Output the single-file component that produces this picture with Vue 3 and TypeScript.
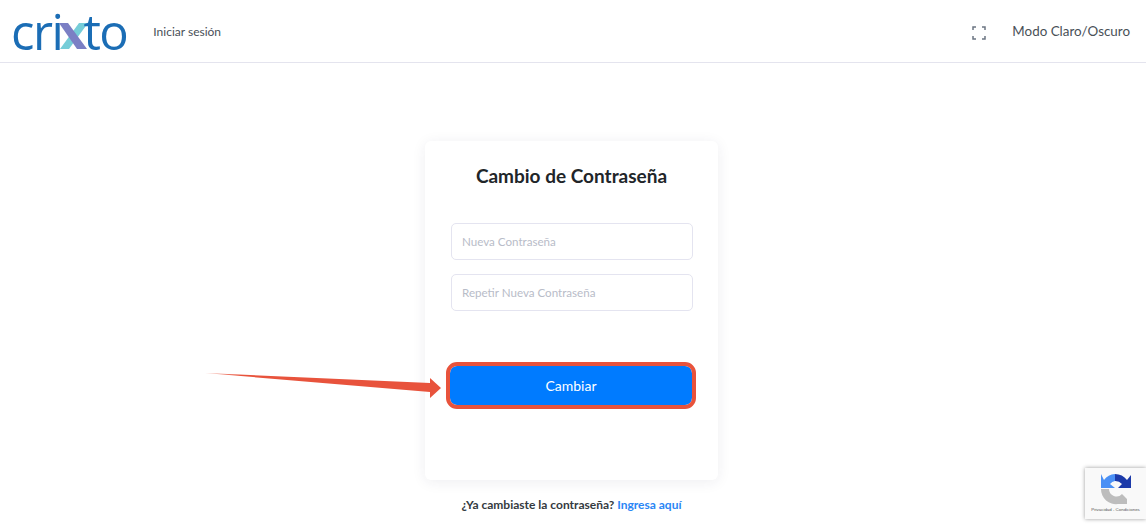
<script setup lang="ts">
import { ref } from 'vue'

const password = ref('')
const repeated = ref('')
</script>

<template>
  <div class="page">
    <header class="topbar">
      <div class="left">
        <span class="logo">cri<svg class="logo-x" viewBox="3 0 21 26" aria-hidden="true">
            <polygon points="20,0 29,0 10,26 1,26" fill="#76cdd8" />
            <polygon points="0,0 9,0 28,26 18,26" fill="#7b7fc4" />
          </svg>to</span>
        <a class="login">Iniciar sesión</a>
      </div>
      <div class="right">
        <svg class="expand" viewBox="0 0 14 14" aria-hidden="true">
          <path d="M1 4V1h3M10 1h3v3M13 10v3h-3M4 13H1v-3" fill="none" stroke="#6c7583" stroke-width="1.500" />
        </svg>
        <span class="mode">Modo Claro/Oscuro</span>
      </div>
    </header>

    <main class="content">
      <form class="card" @submit.prevent>
        <h1>Cambio de Contraseña</h1>
        <div class="fields">
          <input v-model="password" type="password" placeholder="Nueva Contraseña" />
          <input v-model="repeated" type="password" placeholder="Repetir Nueva Contraseña" />
        </div>
        <button type="submit">Cambiar</button>
      </form>
      <p class="footer">¿Ya cambiaste la contraseña? <a>Ingresa aquí</a></p>
    </main>

    <svg class="arrow" viewBox="0 0 240 30" aria-hidden="true">
      <defs>
        <linearGradient id="tail" x1="0" x2="1" y1="0" y2="0">
          <stop offset="0" stop-color="#e8533c" stop-opacity="0.5" />
          <stop offset="0.15" stop-color="#e8533c" />
        </linearGradient>
      </defs>
      <polygon points="0,3 225,13 225,8 236,18 225,28 225,22" fill="url(#tail)" />
    </svg>

    <div class="recaptcha">
      <svg viewBox="0 0 32 32" aria-hidden="true">
        <path d="M15 1A15 15 0 0 0 4 7L1 1v14h14l-5-4a8 8 0 0 1 5-3z" fill="#4a90f5" />
        <path d="M15 1a15 15 0 0 1 12 6l4-5v13H18l4-4a9 9 0 0 0-7-3z" fill="#1c3aa9" />
        <path d="M1 16h8a7.500 7.500 0 0 0 13 5l5 5v5H18A15 15 0 0 1 1 16z" fill="#bdbdbd" />
      </svg>
      <span>Privacidad - Condiciones</span>
    </div>
  </div>
</template>

<style scoped>
.page {
  position: relative;
  height: 525px;
  overflow: hidden;
  background: #fff;
  font-family: Lato, "Open Sans", sans-serif;
  color: #343a40;
}
.topbar {
  display: flex;
  align-items: center;
  justify-content: space-between;
  height: 62px;
  padding: 0 16px 0 11px;
  border-bottom: 1px solid #e4e4ee;
}
.left, .right {
  display: flex;
  align-items: center;
}
.logo {
  display: flex;
  align-items: center;
  font-family: "Open Sans", sans-serif;
  font-size: 49px;
  line-height: 62px;
  letter-spacing: -1.500px;
  color: #1b6db5;
}
.logo-x {
  flex: none;
  width: 21px;
  height: 26px;
  margin-top: 9px;
  overflow: visible;
}
.login {
  margin-left: 26px;
  font-size: 12px;
  color: #495057;
}
.expand {
  width: 14px;
  height: 14px;
  margin-top: 4px;
  margin-right: 26px;
}
.mode {
  font-size: 13.400px;
  color: #495057;
}
.content {
  display: flex;
  flex-direction: column;
  align-items: center;
  padding: 78px 3px 0 0;
}
.card {
  display: flex;
  flex-direction: column;
  box-sizing: border-box;
  width: 293px;
  height: 339px;
  padding: 23px 25px 0;
  border-radius: 6px;
  background: #fff;
  box-shadow: 0 2px 14px rgba(40, 40, 80, 0.08);
}
h1 {
  margin: 0;
  font-size: 19px;
  font-weight: 700;
  line-height: 24px;
  text-align: center;
  color: #212529;
}
.fields {
  display: flex;
  flex-direction: column;
  gap: 14px;
  margin-top: 35px;
}
input {
  box-sizing: border-box;
  width: 242px;
  height: 37px;
  margin-left: 1px;
  padding: 0 10px;
  border: 1px solid #e4e4f0;
  border-radius: 5px;
  font: 11.600px Lato, "Open Sans", sans-serif;
  outline: none;
}
input::placeholder {
  color: #b8bcc8;
}
button {
  width: 242px;
  height: 39px;
  margin-top: 55px;
  border: 0;
  border-radius: 7px;
  background: #007bff;
  outline: 4px solid #e8533c;
  color: #fff;
  font: 14px Lato, "Open Sans", sans-serif;
}
.footer {
  margin: 17px 0 0;
  font-size: 12px;
  font-weight: 700;
  color: #343a40;
}
.footer a {
  color: #2a86f5;
}
.arrow {
  position: absolute;
  left: 205px;
  top: 370px;
  width: 240px;
  height: 30px;
}
.recaptcha {
  position: absolute;
  left: 1085px;
  top: 468px;
  display: flex;
  flex-direction: column;
  align-items: center;
  box-sizing: border-box;
  width: 61px;
  height: 51px;
  padding-top: 5px;
  background: #f9f9f9;
  box-shadow: 0 0 4px rgba(0, 0, 0, 0.4);
}
.recaptcha svg {
  width: 32px;
  height: 32px;
}
.recaptcha span {
  margin-top: 2px;
  font: 4.400px "Liberation Sans", sans-serif;
  white-space: nowrap;
  color: #555;
}
</style>
